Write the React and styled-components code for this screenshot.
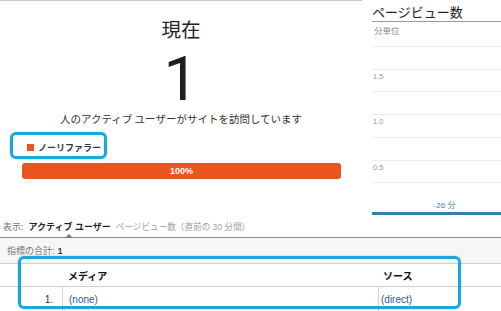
import React from "react";
import styled, { createGlobalStyle } from "styled-components";

const Global = createGlobalStyle`
  html, body { margin: 0; padding: 0; background: #fff; }
  body { font-family: "Liberation Sans", "Noto Sans CJK JP", sans-serif; color: #333; overflow: hidden; }
  * { box-sizing: border-box; }
`;

const Page = styled.div`
  position: relative;
  width: 501px;
  height: 311px;
  overflow: hidden;
`;

const Top = styled.div`
  display: flex;
  gap: 10px;
  height: 215px;
`;

const LeftPanel = styled.div`
  width: 362px;
  border-top: 1px solid #c6c6c6;
  display: flex;
  flex-direction: column;
`;

const Now = styled.div`
  text-align: center;
  font-family: "Noto Sans CJK JP", sans-serif;
  font-size: 19.5px;
  line-height: 24px;
  color: #222;
  margin-top: 16px;
`;

const BigNumber = styled.div`
  text-align: center;
  font-family: Roboto, "Open Sans", sans-serif;
  font-weight: 400;
  font-size: 62px;
  line-height: 62px;
  height: 62px;
  color: #1e1e1e;
  margin-top: 7px;
`;

const Caption = styled.div`
  text-align: center;
  font-family: "Noto Sans CJK JP", sans-serif;
  font-size: 10.5px;
  line-height: 14px;
  color: #333;
  margin-top: 2px;
`;

const LegendBox = styled.div`
  margin: 6px 0 0 10px;
  width: 97px;
  height: 27px;
  border: 3px solid #1ba6df;
  border-radius: 6px;
  box-shadow: 0 0 2px rgba(0, 0, 0, 0.25);
  display: flex;
  align-items: flex-end;
  padding: 0 0 2px 14px;
  gap: 4px;
`;

const Swatch = styled.span`
  width: 7px;
  height: 7px;
  background: ${(p) => p.color};
  margin-bottom: 3px;
`;

const LegendText = styled.span`
  font-family: "Noto Sans CJK JP", sans-serif;
  font-weight: 700;
  font-size: 9px;
  line-height: 13px;
  color: #2f3a4e;
`;

const Bar = styled.div`
  margin: 4px 0 0 22px;
  width: 319px;
  height: 16px;
  border-radius: 3px;
  background: #e9541f;
  color: #fff;
  font-weight: 700;
  font-size: 9px;
  display: flex;
  align-items: center;
  justify-content: center;
`;

const RightPanel = styled.div`
  flex: 1;
  display: flex;
  flex-direction: column;
`;

const ChartTitle = styled.div`
  font-family: "Noto Sans CJK JP", sans-serif;
  font-size: 13px;
  line-height: 18px;
  padding-top: 3px;
  color: #222;
  border-bottom: 1px solid #9a9a9a;
  height: 23px;
`;

const Unit = styled.div`
  font-family: "Noto Sans CJK JP", sans-serif;
  font-size: 8.5px;
  line-height: 12px;
  color: #888;
  padding: 2px 0 0 2px;
  height: 24px;
`;

const GridRow = styled.div`
  height: 23.33px;
  border-top: 1px solid #ececec;
  font-size: 7.5px;
  line-height: 10px;
  color: #999;
  padding: 2px 0 0 1px;
`;

const AxisLabel = styled.div`
  text-align: center;
  font-family: "Liberation Sans", "Noto Sans CJK JP", sans-serif;
  font-size: 8px;
  color: #3b82b9;
  margin-top: -4px;
  padding-left: 16px;
  height: 10px;
  line-height: 10px;
`;

const AxisBar = styled.div`
  height: 3px;
  background: #347fa9;
  margin-top: 1px;
`;

const ShowRow = styled.div`
  position: relative;
  height: 23px;
  border-bottom: 1px solid #8c8c8c;
  display: flex;
  align-items: center;
  gap: 5px;
  padding: 0 0 0 3px;
  font-family: "Liberation Sans", "Noto Sans CJK JP", sans-serif;
  font-size: 9px;
  color: #777;
`;

const ActiveTab = styled.span`
  position: relative;
  font-weight: 700;
  color: #222;
`;

const Caret = styled.span`
  position: absolute;
  left: 36px;
  top: 14px;
  width: 0;
  height: 0;
  border-left: 4px solid transparent;
  border-right: 4px solid transparent;
  border-bottom: 4px solid #777;
`;

const Muted = styled.span`
  color: #a0a0a0;
  font-size: 8.6px;
`;

const SumRow = styled.div`
  height: 26px;
  background: #f6f6f6;
  border-bottom: 1px solid #d0d0d0;
  display: flex;
  align-items: center;
  padding: 0 0 0 7px;
  font-family: "Liberation Sans", "Noto Sans CJK JP", sans-serif;
  font-size: 9px;
  color: #777;
  gap: 3px;
`;

const SumValue = styled.span`
  font-weight: 700;
  color: #1f3d66;
`;

const TableRow = styled.div`
  display: grid;
  grid-template-columns: 62px 316px 1fr;
  height: ${(p) => p.h}px;
  border-bottom: ${(p) => (p.last ? "none" : "1px solid #d0d0d0")};
  font-family: "Liberation Sans", "Noto Sans CJK JP", sans-serif;
  font-size: 10px;
`;

const Cell = styled.div`
  display: flex;
  align-items: center;
  justify-content: ${(p) => (p.right ? "flex-end" : "flex-start")};
  padding: ${(p) => (p.right ? "0 9px 0 0" : `0 0 0 ${p.pl || 6}px`)};
  border-left: ${(p) => (p.sep ? "1px solid #d6d6d6" : "none")};
  font-weight: ${(p) => (p.head ? 700 : 400)};
  color: ${(p) => (p.head ? "#111" : p.link ? "#2a5a92" : "#333")};
`;

const Highlight = styled.div`
  position: absolute;
  left: 18px;
  top: 256px;
  width: 443px;
  height: 53px;
  border: 3px solid #1ba6df;
  border-radius: 6px;
  box-shadow: 0 0 2px rgba(0, 0, 0, 0.25);
  pointer-events: none;
`;

export default function App() {
  return (
    <Page>
      <Global />
      <Top>
        <LeftPanel>
          <Now>現在</Now>
          <BigNumber>1</BigNumber>
          <Caption>人のアクティブ ユーザーがサイトを訪問しています</Caption>
          <LegendBox>
            <Swatch color="#e9541f" />
            <LegendText>ノーリファラー</LegendText>
          </LegendBox>
          <Bar>100%</Bar>
        </LeftPanel>
        <RightPanel>
          <ChartTitle>ページビュー数</ChartTitle>
          <Unit>分単位</Unit>
          <GridRow />
          <GridRow>1.5</GridRow>
          <GridRow />
          <GridRow>1.0</GridRow>
          <GridRow />
          <GridRow>0.5</GridRow>
          <GridRow />
          <AxisLabel>-26 分</AxisLabel>
          <AxisBar />
        </RightPanel>
      </Top>
      <ShowRow>
        <span>表示:</span>
        <ActiveTab>
          アクティブ ユーザー
          <Caret />
        </ActiveTab>
        <Muted>ページビュー数（直前の 30 分間）</Muted>
      </ShowRow>
      <SumRow>
        <span>指標の合計:</span>
        <SumValue>1</SumValue>
      </SumRow>
      <TableRow h={23}>
        <Cell />
        <Cell head>メディア</Cell>
        <Cell head pl={5}>ソース</Cell>
      </TableRow>
      <TableRow h={24} last>
        <Cell right>1.</Cell>
        <Cell sep link>(none)</Cell>
        <Cell sep link pl={2}>(direct)</Cell>
      </TableRow>
      <Highlight />
    </Page>
  );
}
